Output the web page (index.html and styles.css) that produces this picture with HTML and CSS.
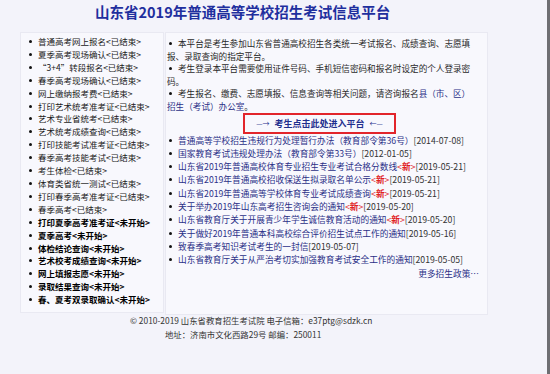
FILE: index.html
```html
<!DOCTYPE html>
<html lang="zh-CN">
<head>
<meta charset="utf-8">
<title>山东省2019年普通高等学校招生考试信息平台</title>
<link rel="stylesheet" href="styles.css">
</head>
<body>
<div class="page">
  <h1 class="title">山东省2019年普通高等学校招生考试信息平台</h1>
  <div class="main">
    <div class="left">
      <ul class="menu">
        <li>普通高考网上报名&lt;已结束&gt;</li>
        <li>夏季高考现场确认&lt;已结束&gt;</li>
        <li>“3+4”转段报名&lt;已结束&gt;</li>
        <li>春季高考现场确认&lt;已结束&gt;</li>
        <li>网上缴纳报考费&lt;已结束&gt;</li>
        <li>打印艺术统考准考证&lt;已结束&gt;</li>
        <li>艺术专业省统考&lt;已结束&gt;</li>
        <li>艺术统考成绩查询&lt;已结束&gt;</li>
        <li>打印技能考试准考证&lt;已结束&gt;</li>
        <li>春季高考技能考试&lt;已结束&gt;</li>
        <li>考生体检&lt;已结束&gt;</li>
        <li>体育类省统一测试&lt;已结束&gt;</li>
        <li>打印春季高考准考证&lt;已结束&gt;</li>
        <li>春季高考&lt;已结束&gt;</li>
        <li class="todo">打印夏季高考准考证&lt;未开始&gt;</li>
        <li class="todo">夏季高考&lt;未开始&gt;</li>
        <li class="todo">体检结论查询&lt;未开始&gt;</li>
        <li class="todo">艺术校考成绩查询&lt;未开始&gt;</li>
        <li class="todo">网上填报志愿&lt;未开始&gt;</li>
        <li class="todo">录取结果查询&lt;未开始&gt;</li>
        <li class="todo">春、夏考双录取确认&lt;未开始&gt;</li>
      </ul>
    </div>
    <div class="right">
      <p class="note">本平台是考生参加山东省普通高校招生各类统一考试报名、成绩查询、志愿填报、录取查询的指定平台。</p>
      <p class="note">考生登录本平台需要使用证件号码、手机短信密码和报名时设定的个人登录密码。</p>
      <p class="note">考生报名、缴费、志愿填报、信息查询等相关问题，请咨询报名<span class="lk">县（市、区）</span><span class="lk">招生（考试）办公室</span>。</p>
      <div class="enter-wrap">
        <a class="enter" href="#"><span class="arrow">—→</span> 考生点击此处进入平台 <span class="arrow">←—</span></a>
      </div>
      <ul class="news">
        <li><span class="t">普通高等学校招生违规行为处理暂行办法（教育部令第36号）</span><span class="d">[2014-07-08]</span></li>
        <li><span class="t">国家教育考试违规处理办法（教育部令第33号）</span><span class="d">[2012-01-05]</span></li>
        <li><span class="t">山东省2019年普通高校体育专业招生专业考试合格分数线</span><span class="new">&lt;<b>新</b>&gt;</span><span class="d">[2019-05-21]</span></li>
        <li><span class="t">山东省2019年普通高校招收保送生拟录取名单公示</span><span class="new">&lt;<b>新</b>&gt;</span><span class="d">[2019-05-21]</span></li>
        <li><span class="t">山东省2019年普通高等学校体育专业考试成绩查询</span><span class="new">&lt;<b>新</b>&gt;</span><span class="d">[2019-05-21]</span></li>
        <li><span class="t">关于举办2019年山东高考招生咨询会的通知</span><span class="new">&lt;<b>新</b>&gt;</span><span class="d">[2019-05-20]</span></li>
        <li><span class="t">山东省教育厅关于开展青少年学生诚信教育活动的通知</span><span class="new">&lt;<b>新</b>&gt;</span><span class="d">[2019-05-20]</span></li>
        <li><span class="t">关于做好2019年普通本科高校综合评价招生试点工作的通知</span><span class="d">[2019-05-16]</span></li>
        <li><span class="t">致春季高考知识考试考生的一封信</span><span class="d">[2019-05-07]</span></li>
        <li><span class="t">山东省教育厅关于从严治考切实加强教育考试安全工作的通知</span><span class="d">[2019-05-05]</span></li>
      </ul>
      <div class="more">更多招生政策…</div>
    </div>
  </div>
  <div class="footer">
    <div class="f1">© 2010-2019 山东省教育招生考试院 电子信箱：e37ptg@sdzk.cn</div>
    <div class="f2">地址：济南市文化西路29号 邮编：250011</div>
  </div>
</div>
</body>
</html>
```
FILE: styles.css
```css
* { box-sizing: border-box; }
html, body { margin: 0; padding: 0; }
body {
  background: #f3f3fa;
  font-family: "Noto Sans CJK SC", "Noto Sans", sans-serif;
  color: #222;
}
.page {
  width: 550px;
  height: 374px;
  border-right: 3px solid #6e6e72;
  overflow: hidden;
}
.title {
  margin: 0;
  padding: 3px 0 0 95px;
  height: 32px;
  font-size: 14.5px;
  line-height: 18px;
  font-weight: bold;
  color: #1f2f9e;
  letter-spacing: 0;
  white-space: nowrap;
}
.main {
  display: flex;
  margin-left: 20px;
  width: 468px;
  height: 283px;
  gap: 1px;
}
.left {
  width: 144px;
  height: 281px;
  background: #f8f8fd;
  border: 1px solid #e9e9f2;
  padding-top: 2px;
}
.menu {
  list-style: none;
  margin: 0;
  padding: 0 0 0 8px;
  font-size: 8.5px;
  line-height: 12.9px;
  white-space: nowrap;
  color: #1a1a1a;
}
.menu li::before {
  content: "";
  display: inline-block;
  width: 3px;
  height: 3px;
  border-radius: 50%;
  background: #111;
  margin-right: 6px;
  vertical-align: 2px;
}
.menu li.todo { font-weight: bold; color: #000; }
.right {
  flex: 1;
  background: #f8f8fd;
  border: 1px solid #e9e9f2;
  padding: 4px 13px 0 1px;
}
.note {
  margin: 0;
  font-size: 8.6px;
  line-height: 12.6px;
  color: #2a2a2a;
}
.note::before, .news li::before {
  content: "";
  display: inline-block;
  width: 3px;
  height: 3px;
  border-radius: 50%;
  background: #111;
  margin: 0 6px 0 2px;
  vertical-align: 2px;
}
.lk { color: #2b3087; }
.enter-wrap {
  display: flex;
  justify-content: center;
  padding-right: 2px;
}
.enter {
  display: flex;
  align-items: center;
  justify-content: center;
  gap: 5px;
  width: 153px;
  height: 21px;
  border: 2px solid #e2252b;
  font-size: 9px;
  font-weight: bold;
  color: #1f2f8e;
  text-decoration: none;
  white-space: nowrap;
}
.enter .arrow {
  font-weight: normal;
  font-size: 7px;
  color: #1f2f8e;
}
.news {
  list-style: none;
  margin: 0;
  padding: 0;
  font-size: 8.7px;
  line-height: 13.3px;
  white-space: nowrap;
}
.news .t { color: #2b3087; }
.news .d { color: #333; }
.news .new { color: #e0201e; }
.news .new b { font-weight: bold; }
.more {
  text-align: right;
  margin-right: -5px;
  font-size: 8.7px;
  line-height: 13.3px;
  color: #2b3087;
}
.footer {
  font-size: 8.4px;
  line-height: 14px;
  color: #333;
  white-space: nowrap;
}
.f1 { padding-left: 130px; margin-top: -2px; }
.f2 { padding-left: 165px; }
```
